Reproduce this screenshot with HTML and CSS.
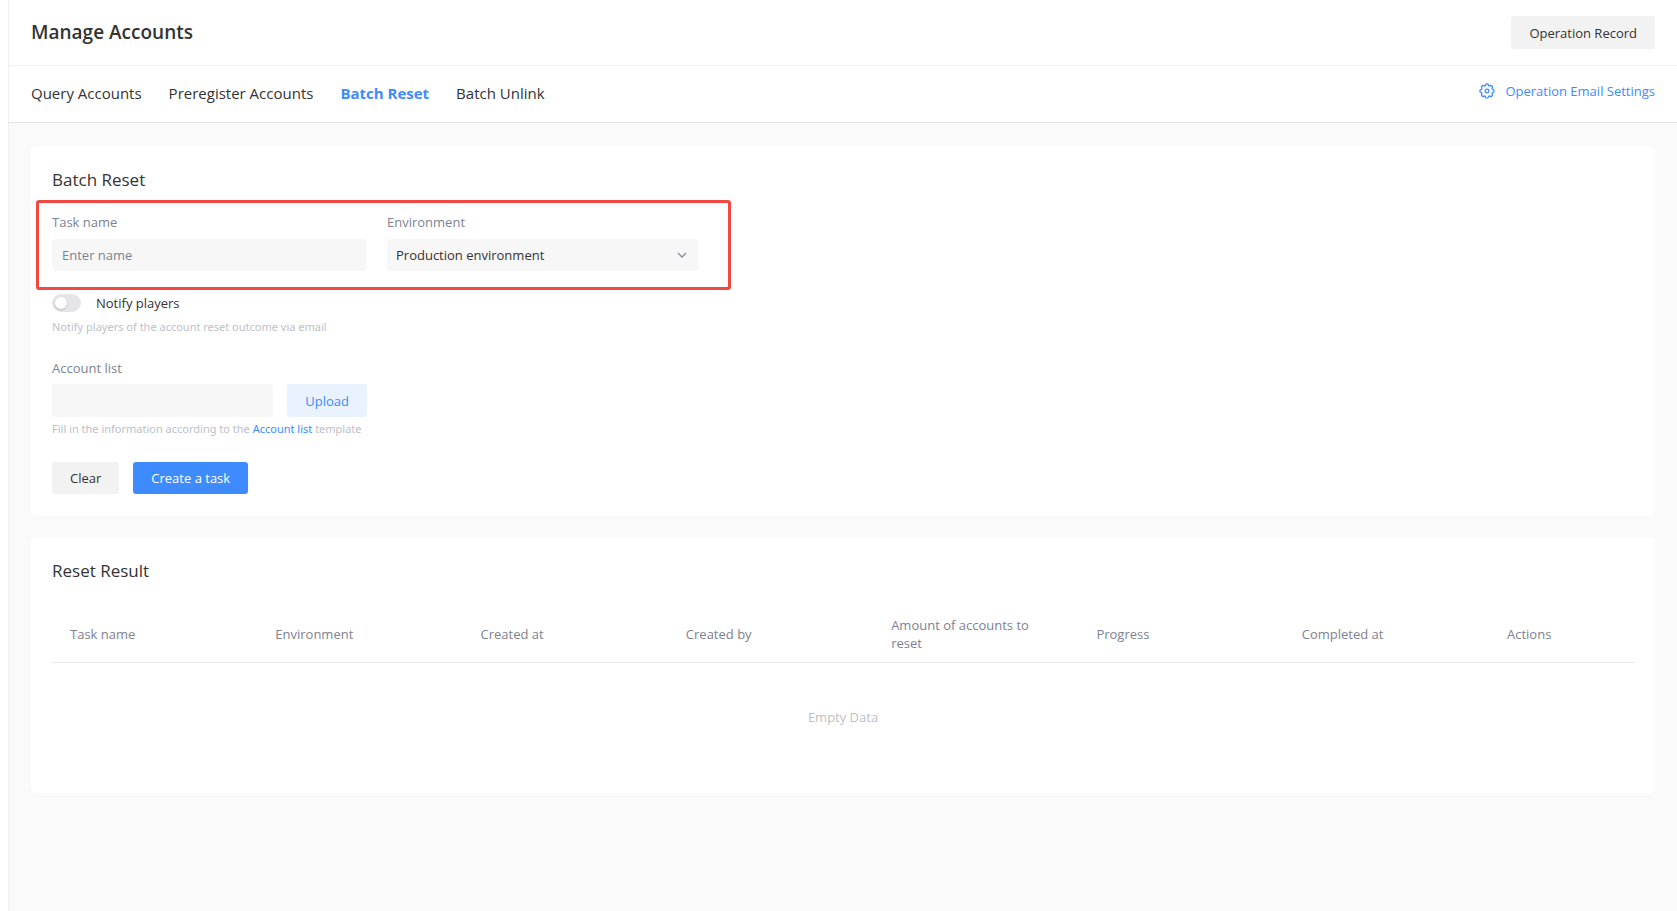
FILE: index.html
```html
<!DOCTYPE html>
<html lang="en">
<head>
<meta charset="utf-8">
<title>Manage Accounts</title>
<link rel="stylesheet" href="styles.css">
</head>
<body>
<div class="page">
  <header class="page-header">
    <h1 class="page-title">Manage Accounts</h1>
    <button class="btn btn-gray btn-tall" type="button">Operation Record</button>
  </header>

  <div class="tab-bar">
    <nav class="tabs">
      <a class="tab" href="#query">Query Accounts</a>
      <a class="tab" href="#preregister">Preregister Accounts</a>
      <a class="tab tab-active" href="#reset" aria-current="page">Batch Reset</a>
      <a class="tab" href="#unlink">Batch Unlink</a>
    </nav>
    <a class="settings-link" href="#email-settings">
      <svg class="gear" viewBox="0 0 16 16" aria-hidden="true">
        <path d="M6.58 1.86A1.5 1.5 0 0 1 9.42 1.86A1.15 1.15 0 0 0 11.34 2.66A1.5 1.5 0 0 1 13.34 4.66A1.15 1.15 0 0 0 14.14 6.58A1.5 1.5 0 0 1 14.14 9.42A1.15 1.15 0 0 0 13.34 11.34A1.5 1.5 0 0 1 11.34 13.34A1.15 1.15 0 0 0 9.42 14.14A1.5 1.5 0 0 1 6.58 14.14A1.15 1.15 0 0 0 4.66 13.34A1.5 1.5 0 0 1 2.66 11.34A1.15 1.15 0 0 0 1.86 9.42A1.5 1.5 0 0 1 1.86 6.58A1.15 1.15 0 0 0 2.66 4.66A1.5 1.5 0 0 1 4.66 2.66A1.15 1.15 0 0 0 6.58 1.86Z"/>
        <circle cx="8" cy="8" r="1.800"/>
      </svg>
      <span>Operation Email Settings</span>
    </a>
  </div>

  <main class="content">
    <form class="card form-card">
      <h2 class="card-title">Batch Reset</h2>
      <div class="field-row">
        <div class="field field-name">
          <label class="label" for="task-name">Task name</label>
          <input class="control" id="task-name" type="text" placeholder="Enter name">
        </div>
        <div class="field field-env">
          <label class="label" for="environment">Environment</label>
          <div class="select-wrap">
            <select class="control select" id="environment">
              <option>Production environment</option>
            </select>
            <svg class="chevron" viewBox="0 0 10 6" aria-hidden="true"><path d="M1 1l4 4 4-4"/></svg>
          </div>
        </div>
      </div>

      <div class="switch-row">
        <input class="switch" id="notify" type="checkbox" role="switch">
        <label class="switch-label" for="notify">Notify players</label>
      </div>
      <p class="hint">Notify players of the account reset outcome via email</p>

      <label class="label list-label" for="account-list">Account list</label>
      <div class="upload-row">
        <input class="control upload-control" id="account-list" type="text" readonly>
        <button class="btn btn-light btn-tall" type="button">Upload</button>
      </div>
      <p class="hint">Fill in the information according to the <a class="hint-link" href="#template">Account list</a> template</p>

      <div class="actions">
        <button class="btn btn-gray" type="reset">Clear</button>
        <button class="btn btn-primary" type="button">Create a task</button>
      </div>
    </form>

    <section class="card">
      <h2 class="card-title">Reset Result</h2>
      <table class="result-table">
        <thead>
          <tr>
            <th>Task name</th>
            <th>Environment</th>
            <th>Created at</th>
            <th>Created by</th>
            <th>Amount of accounts to reset</th>
            <th>Progress</th>
            <th>Completed at</th>
            <th class="col-actions">Actions</th>
          </tr>
        </thead>
        <tbody>
          <tr><td class="empty" colspan="8">Empty Data</td></tr>
        </tbody>
      </table>
    </section>
  </main>
</div>
</body>
</html>
```
FILE: styles.css
```css
* {
  box-sizing: border-box;
}

body {
  margin: 0;
  background: #fff;
  color: #333;
  font-family: "Segoe UI", "Open Sans", "Noto Sans", sans-serif;
  font-size: 13px;
  line-height: 18px;
}

h1, h2, p {
  margin: 0;
}

a {
  text-decoration: none;
}

.page {
  display: flex;
  flex-direction: column;
  min-height: 100vh;
  margin-left: 8px;
  border-left: 1px solid #eef0f3;
}

.page-header,
.tab-bar {
  display: flex;
  align-items: center;
  justify-content: space-between;
  padding: 0 22px;
}

.page-header {
  height: 66px;
  border-bottom: 1px solid #eef0f3;
}

.page-title {
  padding-bottom: 2px;
  font-size: 19px;
  font-weight: 600;
  line-height: 26px;
}

.tab-bar {
  height: 57px;
  border-bottom: 1px solid #e2e3e4;
}

.tabs {
  display: flex;
  gap: 27px;
  padding-bottom: 2px;
}

.tab {
  color: #333;
  font-size: 15px;
  line-height: 20px;
}

.tab-active {
  color: #3d8bff;
  font-weight: 700;
}

.settings-link {
  display: flex;
  align-items: center;
  gap: 10px;
  padding-bottom: 6px;
  color: #3d8bff;
}

.gear {
  width: 16px;
  height: 16px;
  fill: none;
  stroke: #3d8bff;
  stroke-width: 1.3;
  stroke-linejoin: round;
}

.content {
  display: flex;
  flex: 1;
  flex-direction: column;
  gap: 21px;
  padding: 23px 22px;
  background: #fafafa;
}

.card {
  padding: 22px 21px;
  border-radius: 6px;
  background: #fff;
}

.card-title {
  font-size: 17px;
  font-weight: 400;
  line-height: 24px;
}

.field-row {
  position: relative;
  display: flex;
  gap: 20px;
  max-width: 646px;
  margin-top: 21px;
}

.field-row::after {
  content: "";
  position: absolute;
  inset: -13px -33px -19px -16px;
  border: 3px solid #f2483f;
  border-radius: 3px;
  pointer-events: none;
}

.field {
  display: flex;
  flex-direction: column;
  gap: 8px;
}

.field-name {
  flex: 315;
}

.field-env {
  flex: 311;
}

.label {
  color: #7d8292;
}

.control {
  width: 100%;
  height: 32px;
  padding: 0 10px;
  border: 0;
  border-radius: 3px;
  background: #f7f7f7;
  color: #333;
  font: inherit;
}

.control::placeholder {
  color: #7d8292;
  opacity: 1;
}

.select-wrap {
  position: relative;
}

.select {
  display: block;
  padding: 0 9px;
  appearance: none;
}

.chevron {
  position: absolute;
  top: 13px;
  right: 11px;
  width: 10px;
  height: 6px;
  fill: none;
  stroke: #868a9c;
  stroke-width: 1.3;
  pointer-events: none;
}

.switch-row {
  display: flex;
  align-items: center;
  gap: 15px;
  margin-top: 23px;
}

.switch {
  width: 29px;
  height: 18px;
  margin: 0;
  padding: 3px;
  border-radius: 9px;
  background: #e5e5e7;
  appearance: none;
}

.switch::before {
  content: "";
  display: block;
  width: 12px;
  height: 12px;
  border-radius: 50%;
  background: #fff;
  box-shadow: 0 1px 2px rgba(0, 0, 0, 0.2);
}

.hint {
  margin-top: 3px;
  color: #bdbfc8;
  font-family: "Segoe UI", "Noto Sans", sans-serif;
  font-size: 11px;
}

.switch-row + .hint {
  margin-top: 6px;
}

.hint-link {
  color: #3d8bff;
}

.list-label {
  display: block;
  margin-top: 23px;
}

.upload-row {
  display: flex;
  gap: 14px;
  max-width: 315px;
  margin-top: 7px;
}

.upload-control {
  flex: 1;
  height: 33px;
  min-width: 0;
}

.btn {
  height: 32px;
  padding: 0 18px;
  border: 0;
  border-radius: 3px;
  font: inherit;
}

.btn-tall {
  height: 33px;
}

.btn-gray {
  background: #f2f2f2;
  color: #333;
}

.btn-light {
  background: #e9f2ff;
  color: #3d8bff;
}

.btn-primary {
  background: #3d8bff;
  color: #fff;
}

.actions {
  display: flex;
  gap: 14px;
  margin-top: 24px;
}

.result-table {
  width: 100%;
  margin-top: 23px;
  border-collapse: collapse;
  table-layout: fixed;
}

.result-table th {
  padding: 10px 18px;
  border-bottom: 1px solid #e5e6e8;
  color: #7d8292;
  font-weight: 400;
  text-align: left;
}

.result-table .col-actions {
  width: 145px;
}

.empty {
  height: 108px;
  padding: 0;
  color: #bfbfbf;
  text-align: center;
}
```
